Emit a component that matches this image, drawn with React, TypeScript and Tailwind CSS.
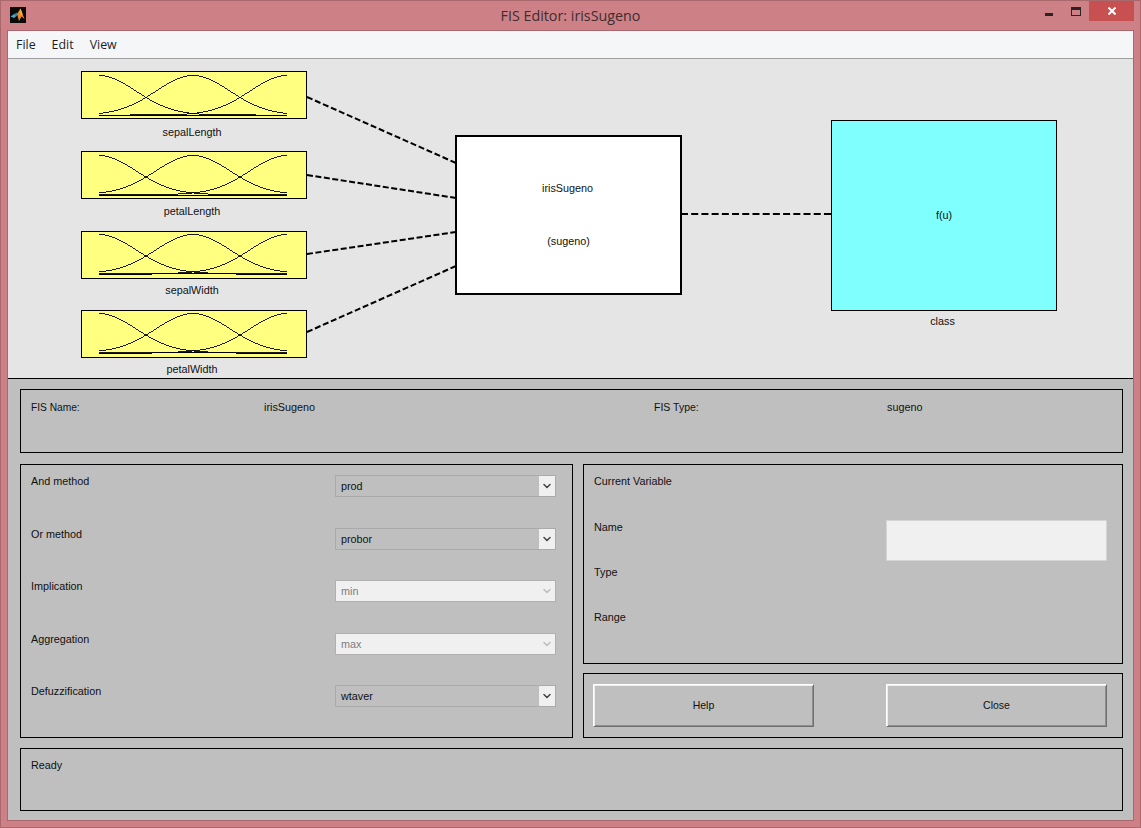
import { ChevronDown } from "lucide-react";

const UI_FONT = "font-['Liberation_Sans',Arial,sans-serif]";

// gaussian membership curves, same as the FIS Editor thumbnails
function MfThumb({ top, bottom, stepped }: { top: number; bottom: number; stepped?: boolean }) {
  const left = 18;
  const right = 206;
  const centers = [left, (left + right) / 2, right];
  const sigma = 37;
  const curves = centers.map((c) => {
    const pts: string[] = [];
    for (let x = left; x <= right; x += 1) {
      const y = Math.exp(-((x - c) * (x - c)) / (2 * sigma * sigma));
      pts.push(`${x},${(bottom - (bottom - top) * y).toFixed(2)}`);
    }
    return pts.join(" ");
  });
  const baseY = Math.floor(bottom + 0.5);
  return (
    <svg width="224" height="46" viewBox="1 1 224 46" className="block" shapeRendering="crispEdges">
      {curves.map((p, i) => (
        <polyline key={i} points={p} fill="none" stroke="#000" strokeWidth="0.9" />
      ))}
      {stepped ? (
        <>
          <rect x={left} y={baseY} width={53} height={1} fill="#000" />
          <rect x={71} y={baseY - 1} width={84} height={1} fill="#000" />
          <rect x={155} y={baseY} width={right - 155} height={1} fill="#000" />
        </>
      ) : (
        <rect x={left} y={baseY} width={right - left} height={1} fill="#000" />
      )}
    </svg>
  );
}

function InputNode({
  label,
  pos,
  labelGap,
  top,
  bottom,
  stepped,
}: {
  label: string;
  pos: string;
  labelGap: string;
  top: number;
  bottom: number;
  stepped?: boolean;
}) {
  return (
    <div className={`absolute left-[73px] w-[226px] ${pos}`}>
      <div className="h-[48px] border border-black bg-[#ffff80]">
        <MfThumb top={top} bottom={bottom} stepped={stepped} />
      </div>
      <div className={`pr-[4px] text-center text-[10.8px] leading-[13px] text-[#111] ${labelGap}`}>{label}</div>
    </div>
  );
}

function Diagram() {
  return (
    <div className="relative h-[319px] shrink-0 bg-[#e5e5e5]">
      <svg width="1125" height="319" className="absolute left-0 top-0">
        <g stroke="#000" strokeWidth="2" fill="none">
          <line x1="299" y1="38" x2="448" y2="104" strokeDasharray="6 2.72" />
          <line x1="299" y1="116" x2="448" y2="139" strokeDasharray="6 2.52" />
          <line x1="299" y1="195" x2="448" y2="173" strokeDasharray="6 2.52" />
          <line x1="299" y1="273" x2="448" y2="207" strokeDasharray="6 2.72" />
          <line x1="673" y1="155" x2="823" y2="155" strokeDasharray="7 3.21" />
        </g>
      </svg>
      <InputNode label="sepalLength" pos="top-[12px]" labelGap="mt-[7px]" top={4.5} bottom={44} />
      <InputNode label="petalLength" pos="top-[92px]" labelGap="mt-[6px]" top={4.5} bottom={43.5} />
      <InputNode label="sepalWidth" pos="top-[172px]" labelGap="mt-[5px]" top={3.5} bottom={42.5} stepped />
      <InputNode label="petalWidth" pos="top-[251px]" labelGap="mt-[5px]" top={3.5} bottom={42.5} stepped />
      <div className="absolute left-[447px] top-[76px] flex h-[160px] w-[227px] flex-col items-center border-2 border-black bg-white text-[10.8px] leading-[13px] text-[#111]">
        <div className="mt-[45px] pr-[2px]">irisSugeno</div>
        <div className="mt-[40px]">(sugeno)</div>
      </div>
      <div className="absolute left-[823px] top-[61px] w-[226px]">
        <div className="flex h-[191px] items-center justify-center border border-black bg-[#80ffff] text-[10.8px] leading-[13px] text-[#111]">
          f(u)
        </div>
        <div className="mt-[4px] pr-[3px] text-center text-[10.8px] leading-[13px] text-[#111]">class</div>
      </div>
    </div>
  );
}

function Panel({ className, children }: { className: string; children?: React.ReactNode }) {
  return <div className={`border border-black bg-[#bfbfbf] ${className}`}>{children}</div>;
}

function MethodRow({ label, value, disabled }: { label: string; value: string; disabled?: boolean }) {
  return (
    <div className="flex h-[52.6px] shrink-0 justify-between">
      <div className="leading-[13px]">{label}</div>
      <div
        className={`flex h-[22px] w-[221px] items-center justify-between border ${
          disabled ? "border-[#b0b0b0] bg-[#f0f0f0] text-[#7d7d7d]" : "border-[#aaaaaa] bg-[#bfbfbf] text-[#111]"
        }`}
      >
        <span className="pl-[5px]">{value}</span>
        <span
          className={`flex h-full w-[16px] items-center justify-center ${
            disabled ? "text-[#bdbdbd]" : "bg-[#f0f0f0] text-[#444]"
          }`}
        >
          <ChevronDown size={12} strokeWidth={3} />
        </span>
      </div>
    </div>
  );
}

function BevelButton({ label }: { label: string }) {
  return (
    <button className="h-[43px] w-[221px] border border-b-[#6e6e6e] border-l-white border-r-[#6e6e6e] border-t-white bg-[#bfbfbf] text-[10.5px] text-[#111] shadow-[inset_1px_1px_0_#ececec,inset_-1px_-1px_0_#8f8f8f]">
      {label}
    </button>
  );
}

function ControlArea() {
  return (
    <div className="flex min-h-0 flex-1 flex-col border-t border-black bg-[#bfbfbf] pl-[12px] pr-[10px] pt-[10px] text-[10.8px] text-[#111]">
      <Panel className="grid h-[64px] shrink-0 grid-cols-[233px_390px_233px_1fr] px-[10px] pt-[11px] leading-[13px]">
        <div className="text-[10.2px]">FIS Name:</div>
        <div>irisSugeno</div>
        <div className="text-[10.5px]">FIS Type:</div>
        <div>sugeno</div>
      </Panel>

      <div className="mt-[11px] flex h-[274px] shrink-0 gap-[10px]">
        <Panel className="flex w-[553px] flex-col py-[10px] pl-[10px] pr-[16px]">
          <MethodRow label="And method" value="prod" />
          <MethodRow label="Or method" value="probor" />
          <MethodRow label="Implication" value="min" disabled />
          <MethodRow label="Aggregation" value="max" disabled />
          <MethodRow label="Defuzzification" value="wtaver" />
        </Panel>

        <div className="flex flex-1 flex-col gap-[9px]">
          <Panel className="relative h-[200px] shrink-0 pl-[10px] pt-[10px] leading-[13px]">
            <div>Current Variable</div>
            <div className="mt-[33px]">Name</div>
            <div className="mt-[32px]">Type</div>
            <div className="mt-[32px]">Range</div>
            <div className="absolute left-[302px] top-[55px] h-[41px] w-[221px] border border-[#d4d4d4] bg-[#f0f0f0]" />
          </Panel>
          <Panel className="flex flex-1 items-center justify-between pl-[9px] pr-[15px]">
            <BevelButton label="Help" />
            <BevelButton label="Close" />
          </Panel>
        </div>
      </div>

      <Panel className="mt-[10px] h-[63px] shrink-0 pl-[10px] pt-[10px] leading-[13px]">Ready</Panel>
    </div>
  );
}

function MatlabIcon() {
  return (
    <svg width="16" height="16" viewBox="0 0 16 16" className="block">
      <rect width="16" height="16" fill="#0a0a0a" />
      <path d="M0.5 9.5 L5 6.5 L7 8.5 L4 11 Z" fill="#4aa8c8" />
      <path d="M4 7.5 L7 5.5 L8 7 L6 9 Z" fill="#2f7fa6" />
      <path d="M7 7 L10.5 1.5 L14.5 12 L11.5 9.5 L9 14 Z" fill="#e8862a" />
      <path d="M10.5 1.5 L12.5 7 L11 9 L9.5 5 Z" fill="#f4b23a" />
    </svg>
  );
}

export default function App() {
  return (
    <div className={`flex h-[828px] w-[1141px] flex-col border border-[#a9686e] bg-[#cd8186] ${UI_FONT}`}>
      <div className="relative flex h-[29px] shrink-0 items-center justify-center">
        <div className="absolute left-[9px] top-[6px]">
          <MatlabIcon />
        </div>
        <div className="font-['Open_Sans',sans-serif] text-[14.3px] text-[#3f2c2e]">FIS Editor: irisSugeno</div>
        <div className="absolute left-[1044px] top-[12px] h-[3px] w-[8px] bg-[#2b2224]" />
        <div className="absolute left-[1070px] top-[6px] h-[9px] w-[10px] border border-t-[3px] border-[#2b2224]" />
        <div className="absolute left-[1088px] top-0 flex h-[20px] w-[45px] items-center justify-center bg-[#c75050]">
          <svg width="8" height="8" viewBox="0 0 8 8">
            <path d="M0.5 0.5 L7.5 7.5 M7.5 0.5 L0.5 7.5" stroke="#fff" strokeWidth="2" />
          </svg>
        </div>
      </div>

      <div className="mx-[6px] mb-[6px] flex min-h-0 flex-1 flex-col border border-[#a9686e]">
        <div className="flex h-[27px] shrink-0 items-center gap-[16px] bg-[#f5f6f8] pl-[8px] pt-[1px] font-['Open_Sans',sans-serif] text-[12.4px] text-[#1e1e2a]">
          <span>File</span>
          <span>Edit</span>
          <span>View</span>
        </div>
        <div className="h-px shrink-0 bg-[#a0a0a0]" />
        <Diagram />
        <ControlArea />
      </div>
    </div>
  );
}
